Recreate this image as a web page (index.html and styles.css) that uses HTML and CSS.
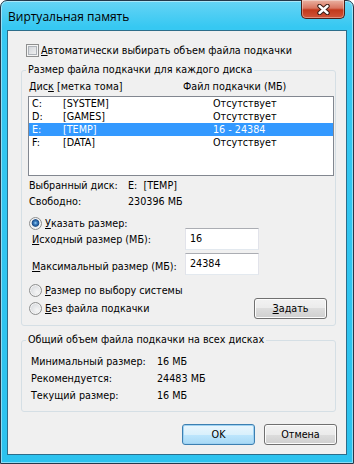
FILE: index.html
```html
<!DOCTYPE html>
<html lang="ru">
<head>
    <meta charset="UTF-8">
    <title>Виртуальная память</title>
    <link rel="stylesheet" href="styles.css">
</head>
<body>
    <div class="window">
        <div class="titlebar">
            <span class="title">Виртуальная память</span>
            <div class="close">
                <svg width="13" height="11" viewBox="0 0 13 11">
                    <path d="M2.5 2 L10.5 9 M10.5 2 L2.5 9" stroke="#3b1d16" stroke-width="4.4" stroke-linecap="round"/>
                    <path d="M2.5 2 L10.5 9 M10.5 2 L2.5 9" stroke="#fff" stroke-width="2.4" stroke-linecap="round"/>
                </svg>
            </div>
        </div>

        <div class="client">
            <div class="check-row">
                <span class="checkbox"></span>
                <span><u>А</u>втоматически выбирать объем файла подкачки</span>
            </div>

            <fieldset class="group group-disks">
                <legend>Размер файла подкачки для каждого диска</legend>
                <div class="list-head">
                    <span>Дис<u>к</u> [метка тома]</span>
                    <span>Файл подкачки (МБ)</span>
                </div>
                <div class="listbox">
                    <div class="row"><span>C:</span><span>[SYSTEM]</span><span>Отсутствует</span></div>
                    <div class="row"><span>D:</span><span>[GAMES]</span><span>Отсутствует</span></div>
                    <div class="row selected"><span>E:</span><span>[TEMP]</span><span>16 - 24384</span></div>
                    <div class="row"><span>F:</span><span>[DATA]</span><span>Отсутствует</span></div>
                </div>
                <div class="info">
                    <span>Выбранный диск:</span><span>E:&nbsp; [TEMP]</span>
                    <span>Свободно:</span><span>230396 МБ</span>
                </div>

                <div class="radio-row first">
                    <span class="radio checked"></span>
                    <span><u>У</u>казать размер:</span>
                </div>
                <div class="size-grid">
                    <span><u>И</u>сходный размер (МБ):</span>
                    <div class="textbox">16</div>
                    <span class="lower"><u>М</u>аксимальный размер (МБ):</span>
                    <div class="textbox">24384</div>
                </div>
                <div class="radio-row second">
                    <span class="radio"></span>
                    <span><u>Р</u>азмер по выбору системы</span>
                </div>
                <div class="radio-row third">
                    <span class="radio"></span>
                    <span><u>Б</u>ез файла подкачки</span>
                    <button class="btn set"><u>З</u>адать</button>
                </div>
            </fieldset>

            <fieldset class="group group-total">
                <legend>Общий объем файла подкачки на всех дисках</legend>
                <div class="totals">
                    <span>Минимальный размер:</span><span>16 МБ</span>
                    <span>Рекомендуется:</span><span>24483 МБ</span>
                    <span>Текущий размер:</span><span>16 МБ</span>
                </div>
            </fieldset>

            <div class="buttons">
                <button class="btn default">OK</button>
                <button class="btn">Отмена</button>
            </div>
        </div>
    </div>
</body>
</html>
```

FILE: styles.css
```css
* {
    box-sizing: border-box;
}

body {
    margin: 0;
    font-family: "DejaVu Sans Condensed", "DejaVu Sans", sans-serif;
    font-size: 10.7px;
    color: #000;
}

u {
    text-decoration: underline;
    text-underline-offset: 1px;
}

/* window frame */
.window {
    width: 354px;
    height: 464px;
    display: flex;
    flex-direction: column;
    padding: 0 6px 8px;
    border: 1px solid #24384a;
    border-radius: 7px 7px 0 0;
    background: linear-gradient(to bottom, #66d4f5 0, #36c8f2 26px, #2cc2ee 100%);
    box-shadow: inset 0 0 0 1px rgba(255, 255, 255, 0.45);
}

.titlebar {
    height: 29px;
    flex-shrink: 0;
    display: flex;
    justify-content: space-between;
    align-items: flex-start;
}

.title {
    font-family: "Open Sans", sans-serif;
    font-size: 12px;
    line-height: 16px;
    padding: 8px 0 0 1px;
}

.close {
    width: 44px;
    height: 19px;
    margin: -1px 2px 0 0;
    display: flex;
    align-items: center;
    justify-content: center;
    border: 1px solid #4b2019;
    border-top: none;
    border-radius: 0 0 5px 5px;
    background: linear-gradient(to bottom, #eab2a2 0, #d97560 45%, #c2391c 55%, #d0553a 100%);
    box-shadow: inset 0 0 0 1px rgba(255, 255, 255, 0.35);
}

.client {
    flex: 1;
    display: flex;
    flex-direction: column;
    background: #f0f0f0;
    border: 1px solid #2d6d8a;
}

/* checkbox row */
.check-row {
    display: flex;
    align-items: center;
    gap: 2px;
    height: 13px;
    margin: 13px 0 0 18px;
}

.checkbox {
    width: 13px;
    height: 13px;
    border: 1px solid #8e8f8f;
    background: linear-gradient(135deg, #cbcfd5, #f6f6f6);
    box-shadow: inset 0 0 0 1px #f4f4f4, inset 0 0 0 2px #aeb3b9;
}

/* group boxes */
.group {
    min-width: 0;
    margin: 6px 10px 0 13px;
    padding: 3px 1px 6px 6px;
    border: 1px solid #d5dfe5;
    border-radius: 3px;
}

.group legend {
    padding: 0 2px;
    margin-left: -2px;
    line-height: 14px;
}

.list-head {
    display: grid;
    grid-template-columns: 154px 1fr;
    line-height: 14px;
    padding-left: 1px;
}

.listbox {
    height: 80px;
    margin-top: 2px;
    border: 1px solid #828790;
    background: #fff;
}

.row {
    display: grid;
    grid-template-columns: 31px 150px 1fr;
    height: 13px;
    line-height: 14px;
    padding-left: 3px;
}

.row.selected {
    background: #3399ff;
    color: #fff;
}

.info {
    display: grid;
    grid-template-columns: 99px 1fr;
    line-height: 16px;
    margin-top: 2px;
    padding-left: 1px;
}

.radio-row {
    display: flex;
    align-items: center;
    gap: 3px;
    height: 16px;
    padding-left: 1px;
}

.radio-row.first {
    margin-top: 5px;
}

.radio-row.second {
    margin-top: 7px;
}

.radio-row.third {
    height: 21px;
}

.radio {
    width: 13px;
    height: 13px;
    border-radius: 50%;
    border: 1px solid #8e8f8f;
    background: radial-gradient(circle at 65% 65%, #f6f6f6 0, #d6d9dd 80%);
    box-shadow: inset 0 0 0 1px #f4f4f4;
}

.radio.checked {
    background: radial-gradient(circle at 50% 45%, #9ad4f5 0, #3a7cc0 1.6px, #1e4f8a 3.4px, #f4f4f4 4.3px, #dcdfe3 6px);
}

.size-grid {
    display: grid;
    grid-template-columns: 153px 74px;
    row-gap: 3px;
    align-items: center;
    margin-top: -3px;
    padding-left: 4px;
}

.size-grid .lower {
    position: relative;
    top: 2px;
}

.textbox {
    height: 22px;
    line-height: 20px;
    padding-left: 4px;
    background: #fff;
    border: 1px solid #e2e3ea;
    border-top-color: #abadb3;
    border-bottom-color: #e3e9ef;
}

/* buttons */
.btn {
    width: 73px;
    height: 21px;
    padding: 0;
    font: inherit;
    color: #000;
    border: 1px solid #707070;
    border-radius: 3px;
    background: linear-gradient(to bottom, #f2f2f2 0, #ebebeb 50%, #dddddd 50%, #cfcfcf 100%);
    box-shadow: inset 0 0 0 1px #fcfcfc;
}

.btn.default {
    border-color: #3c7fb1;
    background: linear-gradient(to bottom, #eaf6fd 0, #d9f0fc 50%, #bee6fd 50%, #a7d9f5 100%);
    box-shadow: inset 0 0 0 1px #9fd2f2;
}

.btn.set {
    margin-left: auto;
    margin-right: 7px;
}

.group-total {
    margin-top: 7px;
    padding: 6px 1px 7px 6px;
}

.totals {
    display: grid;
    grid-template-columns: 126px 1fr;
    grid-auto-rows: 17px;
    align-items: center;
    padding-left: 3px;
}

.buttons {
    display: flex;
    justify-content: flex-end;
    gap: 9px;
    margin: 12px 9px 0 0;
}
```
